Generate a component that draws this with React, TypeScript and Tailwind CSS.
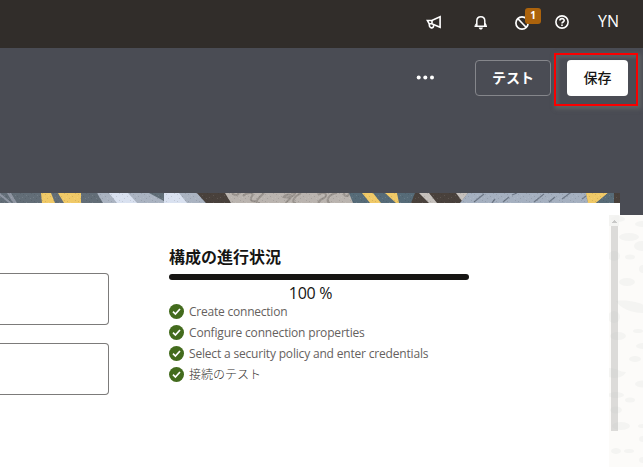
import React from "react";

const steps: { label: string; className: string }[] = [
  { label: "Create connection", className: "tracking-[-0.22px]" },
  { label: "Configure connection properties", className: "tracking-[-0.18px]" },
  { label: "Select a security policy and enter credentials", className: "tracking-[-0.18px]" },
  { label: "接続のテスト", className: "font-light text-[#33302e]" },
];

function Megaphone() {
  return (
    <svg width="16" height="16" viewBox="0 0 16 16" fill="none" stroke="#fff" strokeWidth="1.600">
      <path d="M1.400 6.500h4.400L14.100 2.800v10.400L5.800 9.800H3.200z" />
      <path d="M3.400 9.600c-.2 2 .4 4 2 4.300 1.600.2 2.200-1.200 2.300-2.800M6 6.500v3" />
    </svg>
  );
}

function Bell() {
  return (
    <svg width="14" height="16" viewBox="0 0 14 16" fill="none" stroke="#fff" strokeWidth="1.500">
      <path d="M.5 12.200h12.500M2.800 11.500V7C2.800 4.300 4.400 2.700 6.800 2.700S10.800 4.300 10.800 7v4.500" />
      <path d="M1.400 11.700L2.800 9.500M12.200 11.700L10.800 9.500" />
      <path d="M4.700 13.600c.3 1.500 1 2 2.100 2s1.800-.5 2.100-2z" fill="#fff" stroke="none" />
    </svg>
  );
}

function Header() {
  return (
    <header className="flex h-12 shrink-0 bg-[#312d2a] pl-[426px] pt-[14px]">
      <div className="w-[48px]"><Megaphone /></div>
      <div className="w-[41px]"><Bell /></div>
      <div className="relative w-[40px]">
        <svg width="14" height="16" viewBox="0 0 14 16" fill="none" stroke="#fff" strokeWidth="1.700">
          <circle cx="7" cy="9" r="6.100" />
          <path d="M3.200 5l7.600 8" />
        </svg>
        <span className="absolute -top-[6px] left-[10px] h-4 w-4 rounded-[3px] bg-[#ac630c] text-center text-[10px] font-bold leading-[15px] text-white">1</span>
      </div>
      <svg width="14" height="16" viewBox="0 0 14 16" fill="none" stroke="#fff" strokeWidth="1.600">
        <circle cx="7" cy="8" r="6.100" />
        <path d="M4.900 6.600C4.900 4 9.200 4 9.200 6.500 9.200 8 7 8 7 9.600" />
        <path d="M7 10.400v1.500" />
      </svg>
      <span className="ml-[29px] -mt-[4px] text-base leading-[22px] text-white">YN</span>
    </header>
  );
}

function Toolbar() {
  return (
    <section className="relative flex h-[145px] shrink-0 items-start pl-[416px] pt-3">
      <svg className="mt-[11px]" width="19" height="14" viewBox="0 0 19 14" fill="#fff">
        <circle cx="2.700" cy="6.500" r="2" />
        <circle cx="9.300" cy="6.500" r="2" />
        <circle cx="16" cy="6.500" r="2" />
      </svg>
      <button className="ml-10 h-9 w-[76px] rounded-[4px] border border-[#85868b] text-[14px] font-bold leading-[34px] text-white">テスト</button>
      <button className="ml-4 h-9 w-[61px] rounded-[4px] bg-white text-[14px] font-medium leading-[36px] text-[#161513]">保存</button>
      <div className="pointer-events-none absolute left-[554px] top-[5px] h-[53px] w-[84px] border-2 border-[#fa0000] shadow-[2px_2px_4px_1px_rgba(100,102,102,0.8),inset_3px_3px_3px_rgba(96,99,101,0.7)]" />
    </section>
  );
}

function PatternStrip() {
  return (
    <svg className="block" width="620" height="10" viewBox="0 0 620 10">
      <defs>
        <pattern id="grain" width="11" height="7" patternUnits="userSpaceOnUse">
          <path d="M1 1h1v1H1zM6 3h1v1H6zM9 0h1v1H9zM3 5h1v1H3z" fill="#222" fillOpacity=".12" />
          <path d="M4 2h1v1H4zM8 5h1v1H8zM0 4h1v1H0z" fill="#fff" fillOpacity=".1" />
        </pattern>
      </defs>
      <path fill="#626d77" d="M0 0h620v10H0z" />
      <path fill="#8d94a1" d="M7 0h4l6 10h-4zM0 0l12 10H9L0 3z" />
      <path fill="#f0c967" d="M41 0h10l4 10H42zM58 0h23v10H64z" />
      <path fill="#aab3c1" d="M97 0h100l9 10H103z" />
      <path fill="#d9e1f0" d="M109 0h19l9 10h-20zM164 0h15l8 10h-23z" />
      <path fill="#606d77" d="M149 0h15v8z" />
      <path fill="#49413c" d="M197 0h30l4 10h-25z" />
      <path fill="#bab4af" d="M225 0h124l6 10H231z" />
      <g fill="none" stroke="#99938e" strokeWidth="2">
        <path d="M232 0c5 5 9-1 5 0M243 3c5-5 12-3 9 0-2 3-2 6 4 5M264 0c-10 9-8 10-4 10M283 5c2-4 9-5 8-1-1 3-5 4-5 6M284 4c9 2 15-6 7-4M301 0c-8 4-10 10-5 10M318 2c6-5 11 0 6 3-5 2-7 5-4 5M337 0c-9 1-12 9-7 10M344 0c0 4 5 4 5 0" />
      </g>
      <path fill="#566b78" d="M349 0h68l-6 10h-58z" />
      <path fill="#f0c967" d="M362 0h11l8 10h-11zM385 0h12l2 10h-3z" />
      <path fill="#49413c" d="M415 0h53l-7 10h-50z" />
      <path fill="#c5c0bc" d="M419 0h10l8 10h-8zM456 0h12l-6 8z" />
      <path fill="#a5b0c0" d="M468 0h118l2 10H460z" />
      <path stroke="#6f7988" strokeWidth="1.300" d="M474 9l10-8M492 10l3-4M503 9l6-5M512 2l5-2M534 9l10-8M549 9l6-5M562 6l8-6M582 6l4-3" />
      <path fill="#f0c967" d="M586 0h22l-12 10h-8z" />
      <path fill="#586b77" d="M608 0h6v10h-18z" />
      <path fill="#49413c" d="M614 0h6v10h-6z" />
      <path fill="url(#grain)" d="M0 0h620v10H0z" />
    </svg>
  );
}

function ScrollGutter() {
  return (
    <svg width="34" height="252" viewBox="0 0 34 252" className="block">
      <path fill="#fcfbf9" d="M0 0h34v252H0z" />
      <g fill="#f4f4f2">
        <ellipse cx="20" cy="22" rx="10" ry="4" />
        <ellipse cx="33" cy="31" rx="8" ry="5" />
        <ellipse cx="9" cy="4" rx="7" ry="3" />
        <ellipse cx="33" cy="9" rx="7" ry="3" />
        <ellipse cx="5" cy="41" rx="6" ry="5" />
        <ellipse cx="21" cy="42" rx="5" ry="2.500" />
        <ellipse cx="34" cy="54" rx="4" ry="4" />
        <ellipse cx="18" cy="67" rx="8" ry="4" />
        <path d="M7 86c14-2 28 3 28 5v7c-13 0-24-5-28-12z" />
        <ellipse cx="5" cy="102" rx="6" ry="6" />
        <ellipse cx="29" cy="116" rx="5" ry="2" />
        <ellipse cx="9" cy="121" rx="8" ry="4" />
        <ellipse cx="34" cy="131" rx="7" ry="3" />
        <ellipse cx="26" cy="144" rx="6" ry="3" />
        <path d="M0 153c9 0 10 4 17 4-3 6-11 7-17 5z" />
        <ellipse cx="34" cy="169" rx="8" ry="3.500" />
        <ellipse cx="7" cy="180" rx="8" ry="3" />
        <ellipse cx="21" cy="185" rx="5" ry="2.500" />
        <ellipse cx="7" cy="195" rx="6" ry="3.500" />
        <ellipse cx="12" cy="211" rx="9" ry="4" />
        <ellipse cx="34" cy="211" rx="5" ry="2" />
        <ellipse cx="34" cy="224" rx="4" ry="3" />
        <ellipse cx="7" cy="236" rx="5" ry="3" />
        <ellipse cx="20" cy="236" rx="5" ry="2" />
        <ellipse cx="34" cy="245" rx="4" ry="3" />
      </g>
      <path fill="#f1f1f0" fillOpacity=".7" d="M0 0h10v11H0z" />
      <path fill="#c8c8c7" d="M5 5h1v1h1v1h1v1H3V7h1V6h1z" />
      <path fill="#bdbdbb" fillOpacity=".52" d="M2 11h7v205H2z" />
    </svg>
  );
}

export default function App() {
  return (
    <div className="flex h-[467px] w-[643px] flex-col overflow-hidden bg-[#4a4c54] font-['Open_Sans','Noto_Sans_CJK_JP',sans-serif]">
      <Header />
      <Toolbar />
      <div className="h-[22px] w-[620px] shrink-0 bg-white"><PatternStrip /></div>
      <div className="flex h-[252px]">
        <main className="flex w-[609px] bg-white">
          <div className="flex w-[109px] flex-col gap-[18px] pt-[58px]">
            <div className="h-[52px] rounded-r-[4px] border border-l-0 border-[#7c7b7a]" />
            <div className="h-[52px] rounded-r-[4px] border border-l-0 border-[#7c7b7a]" />
          </div>
          <div className="ml-[60px] w-[300px] pt-[30px]">
            <h2 className="h-[29px] whitespace-nowrap text-base font-bold leading-[24px] text-[#161513]">構成の進行状況</h2>
            <div className="h-[6px] rounded-full bg-[#161513]" />
            <p className="h-[21px] w-[283px] pt-[2px] text-center text-base leading-[22px] tracking-[-0.3px] text-[#161513]">100 %</p>
            <ul>
              {steps.map((step) => (
                <li key={step.label} className="flex h-[21px] items-center whitespace-nowrap text-[12px] leading-[21px] text-[#65615e]">
                  <svg className="mr-[5px] shrink-0" width="15" height="15" viewBox="0 0 15 15">
                    <circle cx="7.500" cy="7.500" r="7.500" fill="#436b1d" />
                    <path d="M4 7.700l2.400 2.400L11 5" fill="none" stroke="#fff" strokeWidth="1.700" />
                  </svg>
                  <span className={step.className}>{step.label}</span>
                </li>
              ))}
            </ul>
          </div>
        </main>
        <ScrollGutter />
      </div>
    </div>
  );
}
